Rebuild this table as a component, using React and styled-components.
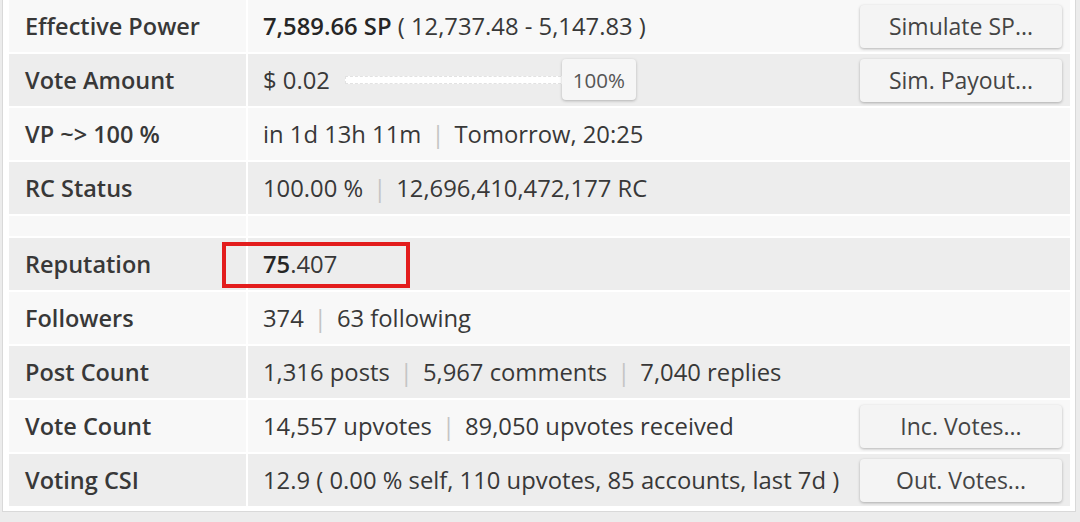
import styled, { createGlobalStyle } from "styled-components";

const GlobalStyle = createGlobalStyle`
  html, body {
    margin: 0;
    padding: 0;
    background: #ececec;
    font-family: "Open Sans", "Noto Sans", sans-serif;
    color: #333;
  }
`;

const rows = [
  {
    label: "Effective Power",
    value: (
      <>
        <strong>7,589.66 SP</strong> ( 12,737.48 - 5,147.83 )
      </>
    ),
    button: "Simulate SP...",
  },
  { label: "Vote Amount", slider: true, button: "Sim. Payout..." },
  { label: "VP ~> 100 %", parts: ["in 1d 13h 11m", "Tomorrow, 20:25"] },
  { label: "RC Status", parts: ["100.00 %", "12,696,410,472,177 RC"] },
  { spacer: true },
  { label: "Reputation", reputation: true },
  { label: "Followers", parts: ["374", "63 following"] },
  { label: "Post Count", parts: ["1,316 posts", "5,967 comments", "7,040 replies"] },
  { label: "Vote Count", parts: ["14,557 upvotes", "89,050 upvotes received"], button: "Inc. Votes..." },
  {
    label: "Voting CSI",
    value: "12.9 ( 0.00 % self, 110 upvotes, 85 accounts, last 7d )",
    button: "Out. Votes...",
  },
];

const App = () => {
  return (
    <>
      <GlobalStyle />
      <Panel>
        <Table>
          {rows.map((row, i) => {
            // zebra stripes, the spacer row counts too
            const dark = i % 2 === 1;
            if (row.spacer) {
              return (
                <Row key={i} $spacer>
                  <LabelCell $dark={dark} />
                  <ValueCell $dark={dark} />
                </Row>
              );
            }
            return (
              <Row key={i}>
                <LabelCell $dark={dark}>{row.label}</LabelCell>
                <ValueCell $dark={dark}>
                  <ValueText>
                    {row.value}
                    {row.parts &&
                      row.parts.map((p, j) => (
                        <span key={j}>
                          {j > 0 && <Pipe>|</Pipe>}
                          {p}
                        </span>
                      ))}
                    {row.slider && (
                      <>
                        $ 0.02
                        <Slider>
                          <Track />
                          <Thumb>100%</Thumb>
                        </Slider>
                      </>
                    )}
                    {row.reputation && (
                      <>
                        <strong>75</strong>.407
                      </>
                    )}
                  </ValueText>
                  {row.reputation && <Highlight />}
                  {row.button && <Button>{row.button}</Button>}
                </ValueCell>
              </Row>
            );
          })}
        </Table>
      </Panel>
    </>
  );
};

export default App;

const Panel = styled.div`
  margin: 0 4px 0 2px;
  padding: 0 5px 5px 6px;
  background: #fff;
  border: 1px solid #d9d9d9;
  border-top: none;
  height: 512px;
  box-sizing: border-box;
`;

const Table = styled.div`
  display: grid;
  grid-template-columns: 238px 1fr;
  row-gap: 2px;
  background: #fff;
`;

const Row = styled.div`
  display: grid;
  grid-template-columns: subgrid;
  grid-column: 1 / -1;
  column-gap: 2px;
  height: ${(p) => (p.$spacer ? "20px" : "52px")};
`;

const LabelCell = styled.div`
  display: flex;
  align-items: center;
  padding-left: 16px;
  background: ${(p) => (p.$dark ? "#ededed" : "#f8f8f8")};
  font-size: 23.5px;
  font-weight: 600;
  color: #383838;
`;

const ValueCell = styled.div`
  position: relative;
  display: flex;
  align-items: center;
  justify-content: space-between;
  padding: 0 8px 0 15px;
  background: ${(p) => (p.$dark ? "#ededed" : "#f8f8f8")};
  font-size: 23.8px;
`;

const ValueText = styled.div`
  display: flex;
  align-items: center;
  white-space: pre;
  color: #383838;

  strong {
    font-weight: 600;
    color: #262626;
  }
`;

const Pipe = styled.span`
  color: #c4c4c4;
  margin: 0 10px;
`;

const Slider = styled.div`
  position: relative;
  width: 291px;
  height: 42px;
  margin-left: 15px;
`;

const Track = styled.div`
  position: absolute;
  left: 0;
  right: 70px;
  top: 17px;
  height: 6px;
  background: #fff;
  border: 1px dashed #e2e2e2;
`;

const Thumb = styled.div`
  position: absolute;
  right: 0;
  top: 0;
  width: 74px;
  height: 41px;
  display: flex;
  align-items: center;
  justify-content: center;
  background: #f6f6f6;
  border-radius: 4px;
  box-shadow: 0 1px 3px rgba(0, 0, 0, 0.25);
  font-size: 20.5px;
  color: #555;
`;

const Highlight = styled.div`
  position: absolute;
  left: -26px;
  top: 4px;
  width: 188px;
  height: 46px;
  box-sizing: border-box;
  border: 4px solid #e31d1d;
`;

const Button = styled.div`
  width: 202px;
  height: 43px;
  display: flex;
  align-items: center;
  justify-content: center;
  background: #f4f4f4;
  border-radius: 4px;
  box-shadow: 0 1px 3px rgba(0, 0, 0, 0.28);
  font-size: 23px;
  color: #444;
`;
